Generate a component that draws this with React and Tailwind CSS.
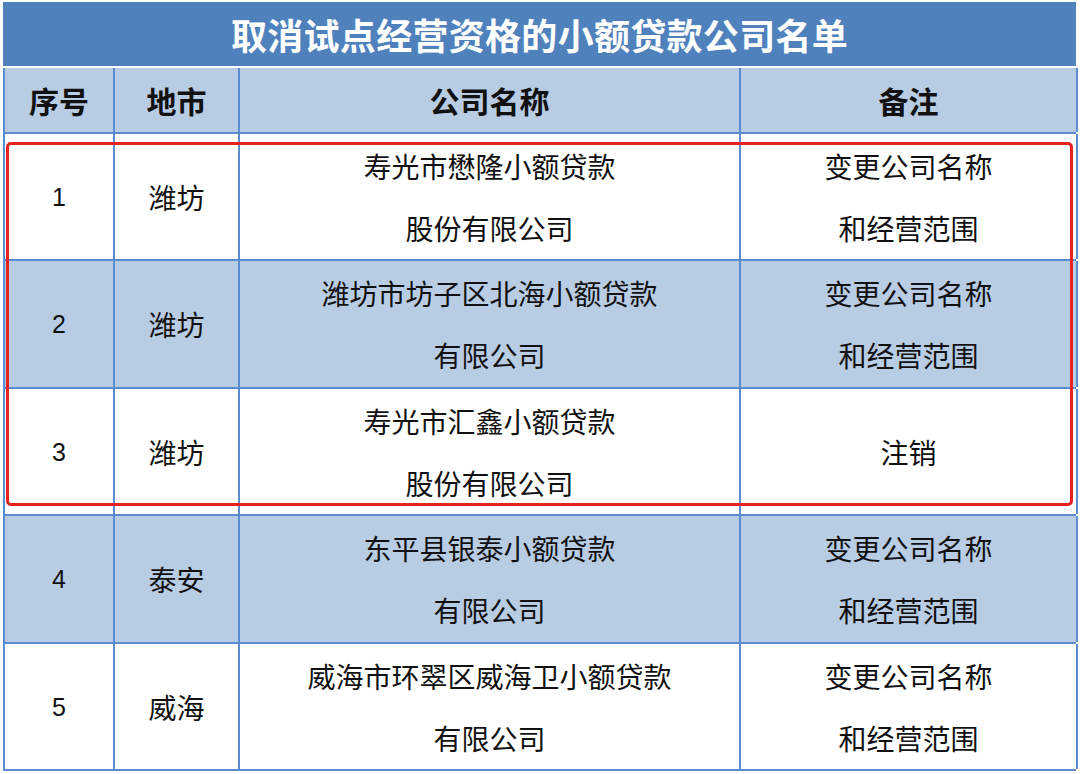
const rows = [
  { no: "1", city: "潍坊", name: ["寿光市懋隆小额贷款", "股份有限公司"], note: ["变更公司名称", "和经营范围"], h: "h-[127px]" },
  { no: "2", city: "潍坊", name: ["潍坊市坊子区北海小额贷款", "有限公司"], note: ["变更公司名称", "和经营范围"], h: "h-[128px]" },
  { no: "3", city: "潍坊", name: ["寿光市汇鑫小额贷款", "股份有限公司"], note: ["注销"], h: "h-[127px]" },
  { no: "4", city: "泰安", name: ["东平县银泰小额贷款", "有限公司"], note: ["变更公司名称", "和经营范围"], h: "h-[128px]" },
  { no: "5", city: "威海", name: ["威海市环翠区威海卫小额贷款", "有限公司"], note: ["变更公司名称", "和经营范围"], h: "h-[127px]" },
];

const cell = "flex flex-col items-center justify-center border-r-2 border-[#5B8BD0] text-center";

export default function App() {
  return (
    <div
      className="relative w-[1080px] h-[774px] overflow-hidden bg-white pl-[3px] pt-[2px] text-[#111]"
      style={{ fontFamily: '"Noto Sans CJK SC", "Noto Sans", sans-serif' }}
    >
      <div className="w-[1073px]">
        <div className="h-[64px] bg-[#4F81BD] flex items-center justify-center text-white text-[36px] font-bold tracking-[0.3px]">
          取消试点经营资格的小额贷款公司名单
        </div>
        <div className="h-[2px] bg-white" />
        <div className="grid grid-cols-[110px_125px_501px_337px] h-[66px] bg-[#B8CCE4] border-l-2 border-b-2 border-[#5B8BD0] text-[30px] font-semibold">
          <div className={cell}>序号</div>
          <div className={cell}>地市</div>
          <div className={cell}>公司名称</div>
          <div className={cell}>备注</div>
        </div>
        {rows.map((r, i) => (
          <div
            key={i}
            className={
              "grid grid-cols-[110px_125px_501px_337px] border-l-2 border-b-2 border-[#5B8BD0] text-[28px] leading-[62px] " +
              r.h + " " +
              (i % 2 === 1 ? "bg-[#B8CCE4]" : "bg-white")
            }
          >
            <div className={cell} style={{ fontFamily: '"Liberation Sans", sans-serif', fontSize: 25 }}>{r.no}</div>
            <div className={cell}>{r.city}</div>
            <div className={cell}>
              {r.name.map((t) => <div key={t}>{t}</div>)}
            </div>
            <div className={cell}>
              {r.note.map((t) => <div key={t}>{t}</div>)}
            </div>
          </div>
        ))}
      </div>
      <div className="absolute left-[6px] top-[142px] w-[1067px] h-[364px] border-[3px] border-[#E8231F] rounded-[5px] pointer-events-none" />
    </div>
  );
}
